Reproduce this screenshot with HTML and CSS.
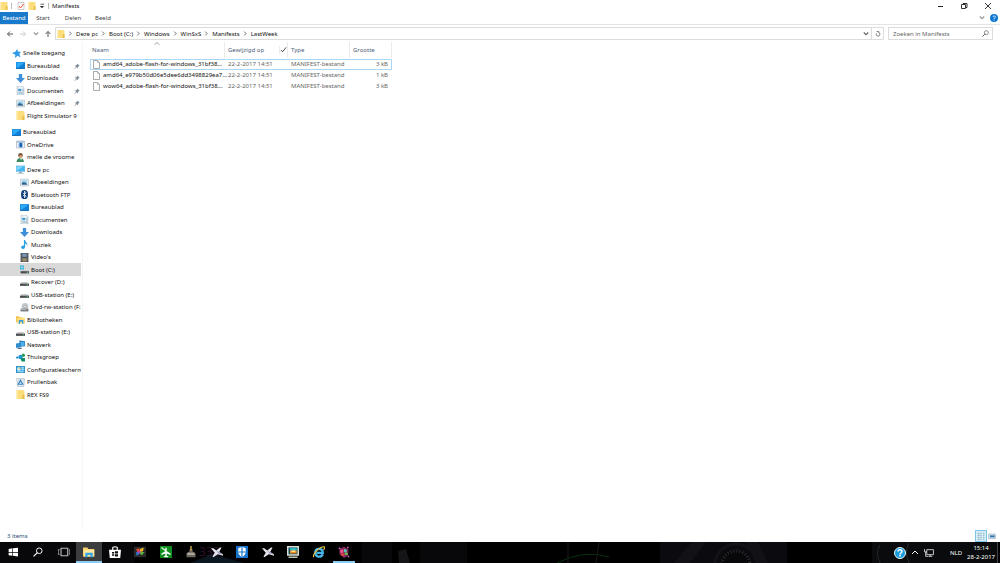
FILE: index.html
```html
<!DOCTYPE html>
<html lang="nl">
<head>
    <meta charset="UTF-8">
    <meta name="viewport" content="width=device-width, initial-scale=1.0">
    <title>Manifests</title>
    <link rel="stylesheet" href="styles.css">
</head>
<body>
    <!-- Iconen -->
    <svg class="sprite" aria-hidden="true">
        <symbol id="i-folder" viewBox="0 0 16 16"><path d="M1 0h12l2 2v14H1z" fill="#fbdd7c"/><path d="M12 8h3v8h-4z" fill="#e9bd4a"/><path d="M1 0h2v16H1z" fill="#ffe9a3"/></symbol>
        <symbol id="i-star" viewBox="0 0 16 16"><path d="M9 0l2 5 5 0-3 4 2 6-5-3-5 4 1-6-6-3 6-2z" fill="#2d9be8"/></symbol>
        <symbol id="i-desktop" viewBox="0 0 16 16"><path d="M0 2h16v12H0z" fill="#0f7fd8"/><path d="M1 3h14L3 12H1z" fill="#2eabf7"/><path d="M0 13h16v1H0z" fill="#0b5fa8"/></symbol>
        <symbol id="i-down" viewBox="0 0 16 16"><path d="M5 0h6v7h5l-8 9-8-9h5z" fill="#3f8fd9"/></symbol>
        <symbol id="i-doc" viewBox="0 0 16 16"><path d="M2 0h9l3 3v13H2z" fill="#edf3f7" stroke="#93a5b2"/><path d="M4 5h5v4H4z" fill="#3d9bd0"/><path d="M10 6h3M4 11h9M4 13h9M10 8h3" stroke="#6b9fc2" stroke-width="1"/></symbol>
        <symbol id="i-pic" viewBox="0 0 16 16"><path d="M1 2h14v12H1z" fill="#f4f8fa" stroke="#9babb5"/><path d="M3 4h10v5H3z" fill="#9bd0ed"/><path d="M3 9l4-2 6 3v2H3z" fill="#34658c"/></symbol>
        <symbol id="i-onedrive" viewBox="0 0 16 16"><path d="M1 2h14v12H1z" fill="#fff" stroke="#8796a5"/><path d="M1 2h14v3H1z" fill="#a7c3d9"/><path d="M3 6h3v6H3zM11 6h2v6h-2z" fill="#b7d5ed"/><path d="M6 5h5v8H6z" fill="#1762b7"/></symbol>
        <symbol id="i-user" viewBox="0 0 16 16"><circle cx="8" cy="4" r="4" fill="#765036"/><path d="M6 4h5v5H6z" fill="#d5a479"/><path d="M1 16c0-5 3-7 7-7s6 3 6 7z" fill="#3c8d66"/><path d="M7 9l2 4 2-4z" fill="#e8eef0"/></symbol>
        <symbol id="i-pc" viewBox="0 0 16 16"><path d="M0 1h16v11H0z" fill="#72bde8"/><path d="M1 2h14v9H1z" fill="#45b7f3"/><path d="M1 2h12L2 10H1z" fill="#83d4fb"/><path d="M6 12h4v2h4v1H2v-1h4z" fill="#8299ab"/></symbol>
        <symbol id="i-bt" viewBox="0 0 16 16"><rect x="2" width="12" height="16" rx="6" fill="#0c3c78"/><path d="M5 5l6 6-3 3V2l3 3-6 6" fill="none" stroke="#fff" stroke-width="1.4"/></symbol>
        <symbol id="i-music" viewBox="0 0 16 16"><path d="M7 0h2c0 4 5 4 4 10-1-3-3-4-4-4v6c0 5-7 5-7 1 0-2 3-4 5-3z" fill="#249fe6"/></symbol>
        <symbol id="i-video" viewBox="0 0 16 16"><path d="M1 0h14v16H1z" fill="#454a50"/><path d="M4 1h8v6H4z" fill="#7c95b5"/><path d="M4 9h8v6H4z" fill="#9a8a6a"/><path d="M2 1v14M14 1v14" stroke="#d9dde0" stroke-dasharray="1 2"/></symbol>
        <symbol id="i-drive" viewBox="0 0 16 16"><path d="M3 7h10l3 3H0z" fill="#c9cbcc"/><path d="M0 10h16v4H0z" fill="#494d50"/><path d="M12 11h2v2h-2z" fill="#77d482"/></symbol>
        <symbol id="i-boot" viewBox="0 0 16 16"><path d="M0 1h3v3H0zM4 1h3v3H4zM0 5h3v3H0zM4 5h3v3H4z" fill="#25b2e7"/><path d="M4 9h9l3 2H1z" fill="#c9cbcc"/><path d="M1 11h15v4H1z" fill="#494d50"/><path d="M12 12h2v2h-2z" fill="#77d482"/></symbol>
        <symbol id="i-dvd" viewBox="0 0 16 16"><circle cx="9" cy="6" r="6" fill="#c5c9cb"/><circle cx="9" cy="6" r="2" fill="#fff" stroke="#8b9092"/><path d="M1 10h14v5H1z" fill="#777b7e"/><path d="M2 11h9v1H2z" fill="#ddd"/></symbol>
        <symbol id="i-lib" viewBox="0 0 16 16"><path d="M0 2h5l1 2h5v9H0z" fill="#f0c04d"/><path d="M3 5h13v10H2V6z" fill="#fbdd7c"/><path d="M5 9h8v7h-2v-4H7v4H5z" fill="#3b9bdc"/></symbol>
        <symbol id="i-net" viewBox="0 0 16 16"><path d="M6 1l10 1v9L6 12z" fill="#276da8"/><path d="M7 3l8 0v7l-8 1z" fill="#4cb0ee"/><path d="M0 6l9-1v8l-9 1z" fill="#2d8dcc"/><path d="M3 14h7v2H3z" fill="#567"/></symbol>
        <symbol id="i-home" viewBox="0 0 16 16"><circle cx="2" cy="8" r="2" fill="#1d8ac6"/><circle cx="8" cy="7" r="4" fill="#1e98d6"/><circle cx="13" cy="4" r="3" fill="#2c9a61"/><path d="M8 9h8v6H10z" fill="#168b63"/></symbol>
        <symbol id="i-config" viewBox="0 0 16 16"><path d="M0 2h16v12H0z" fill="#1679b9"/><path d="M1 3h14v10H1z" fill="#4fb6e8"/><circle cx="5" cy="7" r="3" fill="#d9f0fa"/><path d="M5 7V4a3 3 0 013 3z" fill="#f2b332"/><path d="M10 5h4M10 8h4M3 12h10" stroke="#fff"/></symbol>
        <symbol id="i-bin" viewBox="0 0 16 16"><path d="M1 1h14l-1 14H3z" fill="#e1e9ee" stroke="#a3b1bb"/><path d="M8 4l4 7H4z" fill="none" stroke="#3485c5" stroke-width="2"/></symbol>
        <symbol id="i-pin" viewBox="0 0 16 16"><path d="M9 1l6 6-2 1-2 2-1 4-3-3-5 5-1-1 5-5-4-3 4-1 3-3z" fill="#7d8b96"/></symbol>
        <symbol id="i-file" viewBox="0 0 14 18"><path d="M1 1h8l4 4v12H1z" fill="#fdfdfd" stroke="#8d8d8d" stroke-width="1.500"/><path d="M9 1v4h4" fill="none" stroke="#8d8d8d"/></symbol>
        <symbol id="i-chev" viewBox="0 0 8 8"><path d="M2 1l3 3-3 3" fill="none" stroke="currentColor" stroke-width="1.500"/></symbol>
        <symbol id="i-vee" viewBox="0 0 8 8"><path d="M1 2l3 3 3-3" fill="none" stroke="currentColor" stroke-width="1.500"/></symbol>
        <symbol id="i-arrow" viewBox="0 0 16 16"><path d="M14 8H3M8 3L3 8l5 5" fill="none" stroke="currentColor" stroke-width="2"/></symbol>
        <symbol id="i-search" viewBox="0 0 16 16"><circle cx="10" cy="6" r="4.500" fill="none" stroke="currentColor" stroke-width="1.500"/><path d="M7 9l-6 6" stroke="currentColor" stroke-width="2"/></symbol>
        <symbol id="i-plane" viewBox="0 0 16 16"><path d="M0 3l3 0 4 3 5-4 2 0-3 6 5 3v2l-7-2-6 4-1-1 3-5z" fill="#e4e4ea"/><path d="M7 6l9 6-6-2z" fill="#8c8cb4"/></symbol>
    </svg>

    <div class="window">
        <header class="titlebar">
            <svg class="icon"><use href="#i-folder"/></svg>
            <span class="bar"></span>
            <svg class="icon" viewBox="0 0 16 16"><path d="M2 1h12v14H2z" fill="#fff" stroke="#999"/><path d="M4 8l3 4 6-8" fill="none" stroke="#e0532f" stroke-width="2"/></svg>
            <svg class="icon"><use href="#i-folder"/></svg>
            <svg class="icon small" viewBox="0 0 8 8"><path d="M2 1h5v1H2zM1 4h6L4 7z" fill="#333"/></svg>
            <span class="bar"></span>
            <h1>Manifests</h1>
            <div class="controls">
                <button aria-label="Minimaliseren"><svg viewBox="0 0 8 8"><path d="M2 4.500h5" stroke="#222"/></svg></button>
                <button aria-label="Vorig formaat"><svg viewBox="0 0 8 8"><path d="M1.500 2.500h4v4h-4zM3 2.500v-1h4v4H5.500" fill="none" stroke="#333"/></svg></button>
                <button aria-label="Sluiten"><svg viewBox="0 0 8 8"><path d="M1 1l6 6M7 1L1 7" stroke="#333"/></svg></button>
            </div>
        </header>

        <nav class="tabs">
            <button class="tab active">Bestand</button>
            <button class="tab">Start</button>
            <button class="tab">Delen</button>
            <button class="tab">Beeld</button>
            <div class="tabs-right">
                <button aria-label="Lint uitvouwen"><svg class="icon small gray"><use href="#i-vee"/></svg></button>
                <button aria-label="Help"><svg class="icon" viewBox="0 0 16 16"><circle cx="8" cy="8" r="8" fill="#0f78d4"/><path d="M6 6c0-3 5-3 5 0 0 2-3 1-3 4M8 11v2" fill="none" stroke="#fff" stroke-width="1.500"/></svg></button>
            </div>
        </nav>

        <div class="address-row">
            <div class="history">
                <button aria-label="Terug"><svg class="icon"><use href="#i-arrow"/></svg></button>
                <button class="off" aria-label="Vooruit"><svg class="icon flip"><use href="#i-arrow"/></svg></button>
                <button class="recent" aria-label="Recente locaties"><svg class="icon small"><use href="#i-vee"/></svg></button>
                <button aria-label="Omhoog"><svg class="icon up"><use href="#i-arrow"/></svg></button>
            </div>
            <div class="address">
                <svg class="icon"><use href="#i-folder"/></svg>
                <svg class="crumb-chev"><use href="#i-chev"/></svg><a href="#">Deze pc</a>
                <svg class="crumb-chev"><use href="#i-chev"/></svg><a href="#">Boot (C:)</a>
                <svg class="crumb-chev"><use href="#i-chev"/></svg><a href="#">Windows</a>
                <svg class="crumb-chev"><use href="#i-chev"/></svg><a href="#">WinSxS</a>
                <svg class="crumb-chev"><use href="#i-chev"/></svg><a href="#">Manifests</a>
                <svg class="crumb-chev"><use href="#i-chev"/></svg><a href="#">LastWeek</a>
                <div class="address-end">
                    <button aria-label="Vorige locaties"><svg class="icon small"><use href="#i-vee"/></svg></button>
                    <button class="refresh" aria-label="Vernieuwen"><svg class="icon small" viewBox="0 0 8 8"><path d="M5 2a2.500 2.500 0 11-3 1M2 0.500h3v2" fill="none" stroke="#555"/></svg></button>
                </div>
            </div>
            <div class="search">
                <input type="text" placeholder="Zoeken in Manifests" aria-label="Zoeken in Manifests">
                <svg class="icon"><use href="#i-search"/></svg>
            </div>
        </div>

        <div class="content">
            <nav class="tree">
                <div class="tree-group">
                    <a href="#"><svg class="icon"><use href="#i-star"/></svg><span>Snelle toegang</span></a>
                    <a href="#" class="l1"><svg class="icon"><use href="#i-desktop"/></svg><span>Bureaublad</span><svg class="pin"><use href="#i-pin"/></svg></a>
                    <a href="#" class="l1"><svg class="icon"><use href="#i-down"/></svg><span>Downloads</span><svg class="pin"><use href="#i-pin"/></svg></a>
                    <a href="#" class="l1"><svg class="icon"><use href="#i-doc"/></svg><span>Documenten</span><svg class="pin"><use href="#i-pin"/></svg></a>
                    <a href="#" class="l1"><svg class="icon"><use href="#i-pic"/></svg><span>Afbeeldingen</span><svg class="pin"><use href="#i-pin"/></svg></a>
                    <a href="#" class="l1"><svg class="icon"><use href="#i-folder"/></svg><span>Flight Simulator 9</span></a>
                </div>
                <div class="tree-group">
                    <a href="#"><svg class="icon"><use href="#i-desktop"/></svg><span>Bureaublad</span></a>
                    <a href="#" class="l1"><svg class="icon"><use href="#i-onedrive"/></svg><span>OneDrive</span></a>
                    <a href="#" class="l1"><svg class="icon"><use href="#i-user"/></svg><span>melle de vroome</span></a>
                    <a href="#" class="l1"><svg class="icon"><use href="#i-pc"/></svg><span>Deze pc</span></a>
                    <a href="#" class="l2"><svg class="icon"><use href="#i-pic"/></svg><span>Afbeeldingen</span></a>
                    <a href="#" class="l2"><svg class="icon"><use href="#i-bt"/></svg><span>Bluetooth FTP</span></a>
                    <a href="#" class="l2"><svg class="icon"><use href="#i-desktop"/></svg><span>Bureaublad</span></a>
                    <a href="#" class="l2"><svg class="icon"><use href="#i-doc"/></svg><span>Documenten</span></a>
                    <a href="#" class="l2"><svg class="icon"><use href="#i-down"/></svg><span>Downloads</span></a>
                    <a href="#" class="l2"><svg class="icon"><use href="#i-music"/></svg><span>Muziek</span></a>
                    <a href="#" class="l2"><svg class="icon"><use href="#i-video"/></svg><span>Video's</span></a>
                    <a href="#" class="l2 selected"><svg class="icon"><use href="#i-boot"/></svg><span>Boot (C:)</span></a>
                    <a href="#" class="l2"><svg class="icon"><use href="#i-drive"/></svg><span>Recover (D:)</span></a>
                    <a href="#" class="l2"><svg class="icon"><use href="#i-drive"/></svg><span>USB-station (E:)</span></a>
                    <a href="#" class="l2"><svg class="icon"><use href="#i-dvd"/></svg><span>Dvd-rw-station (F:)</span></a>
                    <a href="#" class="l1"><svg class="icon"><use href="#i-lib"/></svg><span>Bibliotheken</span></a>
                    <a href="#" class="l1"><svg class="icon"><use href="#i-drive"/></svg><span>USB-station (E:)</span></a>
                    <a href="#" class="l1"><svg class="icon"><use href="#i-net"/></svg><span>Netwerk</span></a>
                    <a href="#" class="l1"><svg class="icon"><use href="#i-home"/></svg><span>Thuisgroep</span></a>
                    <a href="#" class="l1"><svg class="icon"><use href="#i-config"/></svg><span>Configuratiescherm</span></a>
                    <a href="#" class="l1"><svg class="icon"><use href="#i-bin"/></svg><span>Prullenbak</span></a>
                    <a href="#" class="l1"><svg class="icon"><use href="#i-folder"/></svg><span>REX FS9</span></a>
                </div>
            </nav>

            <main class="files">
                <table>
                    <thead>
                        <tr>
                            <th class="name">Naam<svg class="sort" viewBox="0 0 8 8"><path d="M1 5l3-3 3 3" fill="none" stroke="#777"/></svg></th>
                            <th class="date"><div class="th-row">Gewijzigd op<svg class="check" viewBox="0 0 8 8"><path d="M1 4l2 2 4-5" fill="none" stroke="#333"/></svg></div></th>
                            <th class="type">Type</th>
                            <th class="size">Grootte</th>
                        </tr>
                    </thead>
                    <tbody>
                        <tr class="focused">
                            <td><div class="file"><svg><use href="#i-file"/></svg><span>amd64_adobe-flash-for-windows_31bf38...</span></div></td>
                            <td>22-2-2017 14:51</td>
                            <td>MANIFEST-bestand</td>
                            <td class="num">3 kB</td>
                        </tr>
                        <tr>
                            <td><div class="file"><svg><use href="#i-file"/></svg><span>amd64_e979b50d06e5dee6dd3498829ea7...</span></div></td>
                            <td>22-2-2017 14:51</td>
                            <td>MANIFEST-bestand</td>
                            <td class="num">1 kB</td>
                        </tr>
                        <tr>
                            <td><div class="file"><svg><use href="#i-file"/></svg><span>wow64_adobe-flash-for-windows_31bf38...</span></div></td>
                            <td>22-2-2017 14:51</td>
                            <td>MANIFEST-bestand</td>
                            <td class="num">3 kB</td>
                        </tr>
                    </tbody>
                </table>
            </main>
        </div>

        <div class="statusbar">
            <span>3 items</span>
            <div class="views">
                <button class="on" aria-label="Details"><svg viewBox="0 0 12 12"><path d="M1 2h3M1 5h3M1 8h3M1 11h3M5 2h2M5 5h2M5 8h2M5 11h2M9 2h2M9 5h2M9 8h2M9 11h2" stroke="#728b9c"/></svg></button>
                <button aria-label="Grote pictogrammen"><svg viewBox="0 0 12 12"><path d="M1 3h10v7H1z" fill="#d5e9f5" stroke="#9aacba"/><path d="M3 5h7v3H3z" fill="#3477a8"/></svg></button>
            </div>
        </div>
    </div>

    <!-- Taakbalk -->
    <footer class="taskbar">
        <svg class="wallpaper" width="1000" height="21" viewBox="0 0 1000 21" aria-hidden="true">
            <path d="M0 0h134v21H0zM362 0h30v21h-30zM420 0h47v21h-47z" fill="#08080a"/>
            <path d="M398 9l8-2 4 14h-11z" fill="#151517"/>
            <path d="M660 0h127v21H660z" fill="#0b0b0f"/>
            <path d="M674 21l18-21h14l-16 21zM746 0h12l10 21h-12z" fill="#121216"/>
            <path d="M557 21q27-14 52-6" fill="none" stroke="#06300f"/>
            <path d="M568 0v21M599 0l-3 21" stroke="#1d1520"/>
            <circle cx="736" cy="23" r="14" fill="#08080a" stroke="#303034" stroke-width="3" stroke-dasharray="1 2"/>
            <circle cx="736" cy="23" r="21" fill="none" stroke="#131317" stroke-width="3"/>
            <path d="M872 0h125v21H872z" fill="#090b0c"/>
            <path d="M880 3q-5 8 0 18M909 1q-5 9 0 20" fill="none" stroke="#262a2c"/>
            <path d="M190 21l22-9 32 9z" fill="#0a1620"/>
            <text x="199" y="14" font-size="12" fill="#2b0f2c">330</text>
        </svg>
        <div class="apps">
            <button aria-label="Start"><svg viewBox="0 0 16 16"><path d="M1 3l6-1v6H1zM8 2l8-1v7H8zM1 9h6v5l-6-1zM8 9h8v6l-8-1z" fill="#fff"/></svg></button>
            <button aria-label="Zoeken"><svg viewBox="0 0 16 16"><use href="#i-search" width="16" height="16"/></svg></button>
            <button aria-label="Taakweergave"><svg viewBox="0 0 16 16"><path d="M4 3h9v10H4zM2 5H0v6h2M15 5h1v6h-1" fill="none" stroke="#bbb" stroke-width="1.500"/></svg></button>
            <button class="open current" aria-label="Verkenner"><svg viewBox="0 0 16 16"><path d="M0 2h6l1 2h8v10H0z" fill="#f6d06a"/><path d="M1 5h14v9H1z" fill="#ffe9a0"/><path d="M3 9h10v6h-3v-3H6v3H3z" fill="#35a5e5"/></svg></button>
            <button aria-label="Store"><svg viewBox="0 0 16 16"><path d="M0 5h16l-1 11H1z" fill="#fff"/><path d="M5 6V2q3-2 6 0v4" fill="none" stroke="#fff" stroke-width="1.500"/><path d="M4 8h3v2H4zM8 7h4v3H8zM4 11h3v2H4zM8 11h4v3H8z" fill="#111"/></svg></button>
            <button aria-label="Media"><svg viewBox="0 0 16 16"><path d="M0 1h16v14H0z" fill="#292929"/><path d="M3 4l4-1 1 4-4 1z" fill="#e34a35"/><path d="M8 4l5-2-1 5-4 1z" fill="#eebb23"/><path d="M3 8l4 0v3l-4 2z" fill="#3476cf"/><path d="M8 8l6 0-3 4-3-1z" fill="#5cb33f"/><path d="M6 6l3 1-1 3-3-1z" fill="#b03fb4"/></svg></button>
            <button aria-label="Flight planner"><svg viewBox="0 0 16 16"><rect width="16" height="16" rx="1" fill="#118d20"/><path d="M8 2l1 1v4l5 3v2l-5-2v3l2 1v1H5v-1l2-1v-3l-5 2v-2l5-3V3z" fill="#fff"/><path d="M2 2l5 4" stroke="#d5f2d6" stroke-width="2"/></svg></button>
            <button aria-label="Tower"><svg viewBox="0 0 16 16"><path d="M6 4h4v3l4 3v5H2v-5l4-3z" fill="#6e675c"/><path d="M7 0h2v6H7z" fill="#c9a34e"/><path d="M3 9h10v3H3z" fill="#a9a79c"/></svg></button>
            <button aria-label="Flight Simulator"><svg><use href="#i-plane"/></svg></button>
            <button aria-label="Beveiliging"><svg viewBox="0 0 16 16"><path d="M0 0h16v16H0z" fill="#1673ce"/><path d="M8 1l5 2v5q0 4-5 7-5-3-5-7V3z" fill="#fff"/><path d="M8 1v14M3 8h10" stroke="#1673ce" stroke-width="1.500"/></svg></button>
            <button aria-label="Flight Simulator 2004"><svg><use href="#i-plane"/></svg></button>
            <button aria-label="Beeldscherm"><svg viewBox="0 0 16 16"><path d="M0 0h16v13H0z" fill="#d9e1d8"/><path d="M2 2h12v9H2z" fill="#114b58"/><path d="M4 3h9v3H4z" fill="#34c8d3"/><path d="M4 6h9v4H4z" fill="#ef8b22"/><path d="M6 6h5v2H6z" fill="#ffe680"/><path d="M2 14h12v2H2z" fill="#c4c7b6"/></svg></button>
            <button aria-label="Internet Explorer"><svg viewBox="0 0 16 16"><path d="M13 11c-2 5-10 4-10-2 0-7 10-7 10 0H5" fill="none" stroke="#45b9ed" stroke-width="3"/><path d="M1 15C-1 11 8 1 15 1c1 1 0 3-1 4" fill="none" stroke="#f0c13a" stroke-width="1.500"/></svg></button>
            <button class="open" aria-label="Paint"><svg viewBox="0 0 16 16"><path d="M2 4l6-3 6 4-1 8-5 3-6-5z" fill="#8d295e"/><path d="M3 5h4v4H3z" fill="#f05a8a"/><path d="M8 4l4 1-1 4-3-1z" fill="#51c7b8"/><path d="M4 10h4v3H4z" fill="#e6413d"/><path d="M9 9h4v3H9z" fill="#67b84a"/><path d="M12 1h2v2h-2zM1 2h2v2H1zM13 13h2v2h-2z" fill="#d56ad8"/></svg></button>
        </div>
        <div class="tray">
            <button aria-label="Help"><svg class="help" viewBox="0 0 24 24"><circle cx="12" cy="12" r="11" fill="#1a9ddb" stroke="#e9f6fb" stroke-width="2"/><path d="M8 9c0-5 8-5 8 0 0 3-4 3-4 6M12 16v3" fill="none" stroke="#fff" stroke-width="3"/></svg></button>
            <button aria-label="Verborgen pictogrammen"><svg viewBox="0 0 8 8"><path d="M1 5l3-3 3 3" fill="none" stroke="#fff"/></svg></button>
            <button aria-label="Netwerk"><svg class="net" viewBox="0 0 18 18"><path d="M5 3h12v9H5zM8 15h7M11 12v3M1 2v5h4M3 7v8h4" fill="none" stroke="#e6e6e6" stroke-width="1.500"/></svg></button>
            <button class="lang">NLD</button>
            <button class="clock"><span>15:14</span><span>28-2-2017</span></button>
        </div>
    </footer>
</body>
</html>
```
FILE: styles.css
```css
* {
    box-sizing: border-box;
}

body {
    margin: 0;
    height: 100vh;
    display: flex;
    flex-direction: column;
    overflow: hidden;
    background-color: #fff;
    color: #111;
    font-family: "Noto Sans", "Open Sans", sans-serif;
    font-size: 6px;
    line-height: 10px;
}

a {
    color: inherit;
    text-decoration: none;
}

button {
    display: flex;
    align-items: center;
    justify-content: center;
    padding: 0;
    border: none;
    background: none;
    color: inherit;
    font: inherit;
}

svg {
    display: block;
    flex: none;
}

.sprite {
    position: absolute;
    width: 0;
    height: 0;
}

.icon {
    width: 8px;
    height: 8px;
}

.icon.small {
    width: 6px;
    height: 6px;
}

.window {
    flex: 1;
    min-height: 0;
    display: flex;
    flex-direction: column;
}

/* Titelbalk */
.titlebar {
    display: flex;
    align-items: center;
    gap: 3px;
    height: 12px;
}

.titlebar h1 {
    margin: 0;
    font-size: 6px;
    font-weight: normal;
}

.bar {
    width: 1px;
    height: 6px;
    background-color: #bbb;
}

.titlebar .bar:nth-child(2) {
    margin-right: 2px;
}

.controls {
    display: flex;
    margin-left: auto;
}

.controls button {
    width: 24px;
    height: 11px;
}

.controls svg {
    width: 8px;
    height: 8px;
}

/* Tabbladen */
.tabs {
    display: flex;
    height: 13px;
    border-bottom: 1px solid #e3e4e5;
}

.tab {
    width: 30px;
    color: #444;
}

.tab.active {
    width: 28px;
    background-color: #1979ca;
    color: #fff;
}

.tabs-right {
    display: flex;
    align-items: center;
    gap: 5px;
    margin-left: auto;
    padding-right: 2px;
}

.gray {
    color: #999;
}

/* Adresbalk */
.address-row {
    display: flex;
    align-items: center;
    gap: 4px;
    height: 17px;
    padding-right: 7px;
}

.history {
    display: flex;
    align-items: center;
    justify-content: space-between;
    width: 52px;
    padding-left: 6px;
    color: #555;
}

.history .off {
    color: #ccc;
}

.history .recent {
    color: #999;
}

.flip {
    transform: rotate(180deg);
}

.up {
    transform: rotate(90deg);
}

.address {
    flex: 1;
    display: flex;
    align-items: center;
    height: 13px;
    margin-left: -1px;
    padding-left: 1px;
    border: 1px solid #dcdcdc;
}

.crumb-chev {
    width: 5px;
    height: 5px;
    margin: 0 3px;
    color: #666;
}

.address-end {
    display: flex;
    align-self: stretch;
    gap: 2px;
    margin-left: auto;
    color: #666;
}

.refresh {
    width: 12px;
    border-left: 1px solid #dcdcdc;
}

.search {
    display: flex;
    align-items: center;
    width: 105px;
    height: 13px;
    padding: 0 3px 0 4px;
    border: 1px solid #dcdcdc;
    color: #555;
}

.search .icon {
    width: 7px;
    height: 7px;
}

.search input {
    flex: 1;
    min-width: 0;
    padding: 0;
    border: none;
    outline: none;
    background: none;
    font: inherit;
}

.search input::placeholder {
    color: #666;
}

/* Navigatievenster */
.content {
    flex: 1;
    min-height: 0;
    display: flex;
}

.tree {
    display: flex;
    flex-direction: column;
    gap: 4px;
    width: 83px;
    padding: 5px 1px 0 0;
    border-right: 1px solid #f5f5f5;
    overflow: hidden;
}

.tree-group {
    display: grid;
    grid-auto-rows: 12px 13px;
}

.tree a {
    display: flex;
    align-items: center;
    gap: 2px;
    padding-left: 12px;
    overflow: hidden;
    white-space: nowrap;
}

.tree .icon {
    width: 9px;
    height: 9px;
}

.tree .l1 {
    padding-left: 16px;
}

.tree .l2 {
    padding-left: 20px;
}

.tree .selected {
    background-color: #d9d9d9;
}

.pin {
    width: 6px;
    height: 6px;
    margin: 0 1px 0 auto;
}

/* Bestandslijst */
.files {
    flex: 1;
    padding-left: 7px;
}

table {
    width: 302px;
    border-collapse: separate;
    border-spacing: 0;
    table-layout: fixed;
}

th {
    position: relative;
    height: 16px;
    padding: 0 0 0 3px;
    border-right: 1px solid #ebebeb;
    color: #4c607a;
    font-weight: normal;
    text-align: left;
}

.name {
    width: 135px;
    padding-left: 2px;
}

.date {
    width: 63px;
}

.type {
    width: 62px;
}

.sort {
    position: absolute;
    top: -1px;
    left: 64px;
    width: 6px;
    height: 6px;
}

.th-row {
    display: flex;
    align-items: center;
    justify-content: space-between;
}

.check {
    width: 8px;
    height: 8px;
    border-left: 1px solid #ebebeb;
}

tbody::before {
    content: "";
    display: block;
    height: 1px;
}

td {
    height: 11px;
    padding: 0 0 0 3px;
    border: 1px solid transparent;
    border-width: 1px 0;
    color: #666;
    line-height: 9px;
    white-space: nowrap;
}

td:first-child {
    border-left-width: 1px;
    padding-left: 2px;
}

td:last-child {
    border-right-width: 1px;
}

.focused td {
    border-top-color: #a9d7f5;
    border-bottom-color: #a9d7f5;
}

.focused td:first-child {
    border-left-color: #a9d7f5;
}

.focused td:last-child {
    border-right-color: #a9d7f5;
}

td.num {
    padding-right: 3px;
    text-align: right;
}

.file {
    display: flex;
    align-items: center;
    gap: 3px;
    color: #111;
}

.file svg {
    width: 7px;
    height: 9px;
}

/* Statusbalk */
.statusbar {
    display: flex;
    align-items: center;
    justify-content: space-between;
    height: 12px;
    padding: 0 3px 0 7px;
    color: #2b4a75;
}

.views {
    display: flex;
}

.views button {
    width: 10px;
    height: 12px;
}

.views .on {
    width: 12px;
    border: 1px solid #7cc4ea;
    background-color: #d5eefa;
}

.views svg {
    width: 8px;
    height: 8px;
}

/* Taakbalk */
.taskbar {
    position: relative;
    display: flex;
    justify-content: space-between;
    height: 21px;
    background-color: #000;
    color: #fff;
    overflow: hidden;
}

.wallpaper {
    position: absolute;
    top: 0;
    left: 0;
}

.apps {
    position: relative;
    display: grid;
    grid-auto-flow: column;
    grid-auto-columns: 25px 26px;
}

.apps button {
    border: solid transparent;
    border-width: 1px 0 2px;
}

.apps svg {
    width: 12px;
    height: 12px;
}

.apps button:first-child svg,
.apps button:nth-child(2) svg {
    width: 10px;
    height: 10px;
}

.apps .open {
    margin: 0 2px;
    border-bottom-color: #8ccbf5;
}

.apps .current {
    margin: 0;
    background-color: #3b3d3f;
}

.tray {
    position: relative;
    display: flex;
    align-items: center;
    gap: 5px;
    padding-right: 2px;
    border-right: 1px solid #444;
    margin-right: 2px;
}

.tray svg {
    width: 8px;
    height: 8px;
}

.tray .help {
    width: 12px;
    height: 12px;
}

.tray .net {
    width: 10px;
    height: 10px;
}

.lang {
    margin-left: 11px;
}

.clock {
    flex-direction: column;
    line-height: 9px;
}
```
